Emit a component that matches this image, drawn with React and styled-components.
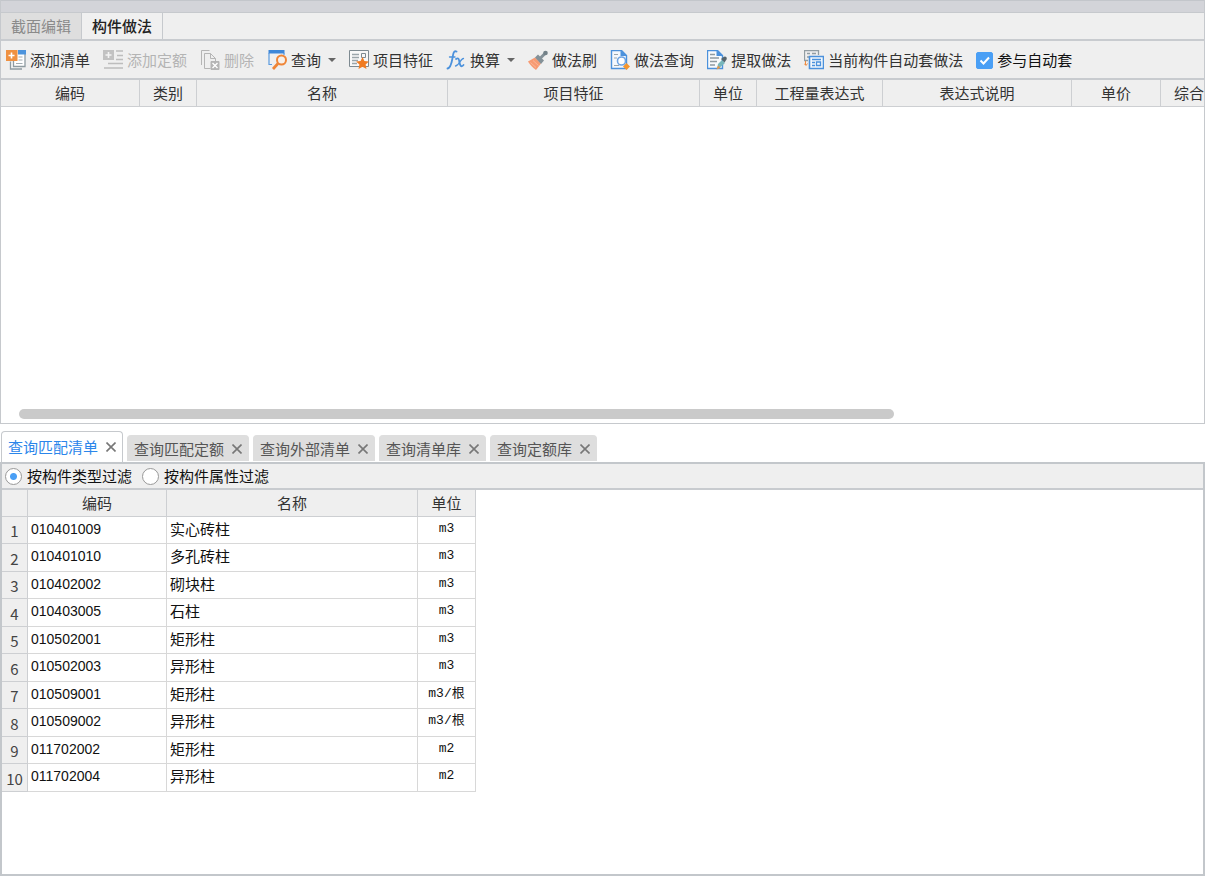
import React, { useState } from "react"
import styled, { createGlobalStyle } from "styled-components"

const GlobalStyle = createGlobalStyle`
  * {
    box-sizing: border-box;
  }

  body {
    margin: 0;
    background-color: #fff;
    color: #333;
    font-family: "Noto Sans CJK SC", sans-serif;
    font-size: 15px;
    line-height: 20px;
  }

  button,
  input {
    font: inherit;
    color: inherit;
    margin: 0;
  }
`

const Page = styled.div`
  display: flex;
  flex-direction: column;
  min-height: 100vh;
`

const TopPanel = styled.section`
  border: 1px solid #c6c9cd;
  border-top: 0;
  overflow: hidden;
`

const TitleStrip = styled.div`
  height: 13px;
  background-color: #d3d4d9;
  border-top: 1px solid #c3c6cb;
  border-bottom: 1px solid #c6c9cd;
`

const EditorTabs = styled.div`
  display: flex;
  background-color: #efefef;
  border-bottom: 2px solid #c8cbcf;
`

const EditorTab = styled.button`
  height: 26px;
  padding: 0 10px;
  border: 0;
  border-right: 1px solid #c6c9cd;
  background-color: ${({ $active }) => ($active ? "#f0f0f0" : "#dedede")};
  color: ${({ $active }) => ($active ? "#222" : "#8a8a8a")};
  font-weight: ${({ $active }) => ($active ? 500 : 400)};
`

const Toolbar = styled.div`
  display: flex;
  align-items: center;
  gap: 13px;
  height: 39px;
  padding: 1px 5px 0;
  background-color: #efefef;
  border-bottom: 2px solid #c8cbcf;
  white-space: nowrap;
`

const ToolButton = styled.button`
  display: flex;
  align-items: center;
  gap: 4px;
  padding: 0;
  border: 0;
  background: none;
  color: #333;

  &:disabled {
    color: #b4b4b4;
  }
`

const Icon = styled.svg`
  display: block;
  flex: none;
  width: 20px;
  height: 20px;
`

const Caret = styled.span`
  margin-left: 3px;
  border: solid transparent;
  border-width: 4px 4px 0;
  border-top-color: #666;
`

const CheckLabel = styled.label`
  display: flex;
  align-items: center;
  gap: 4px;
  color: #111;
`

const CheckBox = styled.input`
  appearance: none;
  width: 17px;
  height: 17px;
  border: 1px solid #4a9ff5;
  border-radius: 2px;
  background-color: #fff;

  &:checked {
    background: #4a9ff5
      url("data:image/svg+xml,%3Csvg xmlns='http://www.w3.org/2000/svg' viewBox='0 0 15 15'%3E%3Cpath d='M3.5 7.5l3 3 5.5-6' fill='none' stroke='white' stroke-width='2'/%3E%3C/svg%3E")
      center / 15px no-repeat;
  }
`

const Table = styled.table`
  width: ${({ $width }) => $width};
  table-layout: fixed;
  border-collapse: separate;
  border-spacing: 0;
`

const HeadCell = styled.th`
  height: 27px;
  padding: 0;
  background-color: #efefef;
  border-right: 1px solid #cdcfd2;
  border-bottom: 1px solid #cdcfd2;
  font-weight: 400;
  text-align: center;
  white-space: nowrap;
`

const EmptyArea = styled.div`
  display: flex;
  align-items: flex-end;
  height: 316px;
  padding: 0 18px 4px;
  background-color: #fff;
`

const ScrollThumb = styled.div`
  width: 75%;
  height: 10px;
  border-radius: 5px;
  background-color: #cacaca;
`

const QueryTabs = styled.div`
  display: flex;
  align-items: flex-end;
  gap: 4px;
  height: 38px;
  padding-left: 1px;
`

const QueryTab = styled.div`
  display: flex;
  align-items: center;
  gap: 8px;
  height: ${({ $active }) => ($active ? "31px" : "26px")};
  margin-bottom: ${({ $active }) => ($active ? "0" : "1px")};
  padding: 0 6px;
  border: 1px solid ${({ $active }) => ($active ? "#c6c9cd" : "#dedede")};
  border-bottom: 0;
  border-radius: 4px 4px 0 0;
  background-color: ${({ $active }) => ($active ? "#fff" : "#dedede")};
  color: ${({ $active }) => ($active ? "#2b86ea" : "#555")};
`

const PlainButton = styled.button`
  display: block;
  padding: 0;
  border: 0;
  background: none;
`

const CloseIcon = styled.svg`
  display: block;
  width: 10px;
  height: 10px;
  stroke: #777;
  stroke-width: 1.6;
`

const QueryPanel = styled.section`
  flex: 1;
  border: 2px solid #c3c7cb;
`

const FilterBar = styled.div`
  display: flex;
  align-items: center;
  gap: 10px;
  height: 26px;
  padding: 0 3px;
  background-color: #efefef;
  border-bottom: 2px solid #c8cbcf;
`

const RadioLabel = styled.label`
  display: flex;
  align-items: center;
  gap: 5px;
  color: #111;
`

const Radio = styled.input`
  appearance: none;
  width: 17px;
  height: 17px;
  border: 1px solid #999;
  border-radius: 50%;
  background-color: #fff;

  &:checked {
    background-image: radial-gradient(circle, #4a9ff5 3px, transparent 4px);
  }
`

const Row = styled.tr`
  height: 27px;

  &:nth-child(even) {
    height: 28px;
  }
`

const Cell = styled.td`
  padding: 0 3px 3px;
  border-right: 1px solid #d8d8d8;
  border-bottom: 1px solid #d8d8d8;
  color: #111;
`

const NumberCell = styled.th`
  padding: 2px 0 0;
  background-color: #efefef;
  border-right: 1px solid #cdcfd2;
  border-bottom: 1px solid #cdcfd2;
  font-weight: 400;
  color: #444;
`

const CodeCell = styled(Cell)`
  font-family: "Liberation Sans", sans-serif;
  font-size: 14px;
`

const UnitCell = styled(Cell)`
  font-family: "Liberation Mono", "Noto Sans CJK SC", monospace;
  font-size: 13px;
  text-align: center;
`

const AddListIcon = () => (
  <Icon viewBox="0 0 20 20">
    <path d="M4 12h10v7H4z" fill="#f7f8f8" />
    <path d="M4.500 11.500v7.500H16" fill="none" stroke="#8f9ba1" strokeWidth="1.300" />
    <path d="M7 4h12v12.500H7z" fill="#fff" />
    <path d="M7.500 11v5.500h11.500V4" fill="none" stroke="#8f9ba1" strokeWidth="1.300" />
    <path d="M12.500 7h4M12.500 10h4M10 13.500h6.500" stroke="#a3adb2" strokeWidth="1.200" />
    <path d="M12 0h8v4.500h-8z" fill="#4d94dd" />
    <path d="M0 0h11.500v11H0z" fill="#ef9142" />
    <path d="M5.500 2.500v6M2.500 5.500h6" stroke="#fff" strokeWidth="1.600" />
  </Icon>
)

const AddQuotaIcon = () => (
  <Icon viewBox="0 0 20 20">
    <path d="M0 0h11v10H0z" fill="#c2c2c2" />
    <path d="M5.500 2v6M2.500 5h6" stroke="#f3f3f3" strokeWidth="1.600" />
    <path d="M13 1h7M14 5.500h6M13 9.500h7M5 13.500h15M1 18h19" stroke="#bdbdbd" strokeWidth="1.600" />
  </Icon>
)

const DeleteIcon = () => (
  <Icon viewBox="0 0 20 20" fill="none" stroke="#b5b5b5">
    <path d="M1.500 15V.5h8M4.500 18.500V3.500h6l5 5v3M10.500 3.500v5h5M4.500 18.500h6" />
    <path d="M11 11.500h8v8h-8z" fill="#b5b5b5" />
    <path d="M12.500 13l5 5m0-5l-5 5" stroke="#fff" strokeWidth="1.400" />
  </Icon>
)

const QueryIcon = () => (
  <Icon viewBox="0 0 20 20" fill="none">
    <path d="M2 3v11.500h3M17 3v2" stroke="#5a9be0" strokeWidth="1.200" />
    <path d="M1.500 0h16v3.500h-16z" fill="#3e87d8" />
    <circle cx="14.500" cy="10" r="4.500" fill="#f7f0ea" stroke="#ef8537" strokeWidth="2" />
    <path d="M11 13.500L6 19" stroke="#ef8537" strokeWidth="2.800" />
  </Icon>
)

const FeatureIcon = () => (
  <Icon viewBox="0 0 20 20" fill="none">
    <path d="M.5.500h19v16H.5z" fill="#f8f8f8" stroke="#7e8a91" />
    <path d="M3 4.500h7M3 7.500h7M3 10.500h6M3 13.500h5" stroke="#9ba5aa" strokeWidth="1.400" />
    <path d="M12.500 3.500h4v4h-4z" stroke="#7e8a91" />
    <path d="M13.500 7l1.900 4.100 4.500.5-3.300 3 .9 4.400-4-2.200-4 2.200.9-4.400-3.300-3 4.500-.5z" fill="#f07b22" />
  </Icon>
)

const FormulaIcon = () => (
  <Icon viewBox="0 0 20 20" fill="none" stroke="#4b91dc" strokeLinecap="round">
    <path d="M10.500 1.500C7.500 0 7.200 4 6.500 8S5 18 1.500 18.500" strokeWidth="1.800" />
    <path d="M3.500 7h5.500" strokeWidth="1.300" />
    <path d="M10 9c3-2 3 1 3.500 3.500S15 18 17.500 15" strokeWidth="1.800" />
    <path d="M17.500 8.500c-3 0-4 7-8 7.500" strokeWidth="1.300" />
  </Icon>
)

const BrushIcon = () => (
  <Icon viewBox="0 0 20 20">
    <path d="M0 11.500l7-4 6 6-5 6.500c-3-2-6-5-8-8.500z" fill="#f79a72" />
    <path d="M2.500 12.500l5.500 5M5 10.500l5.500 5" stroke="#fbb698" />
    <path d="M7 7.500l3-3 6 6-3 3.500z" fill="#849198" />
    <path d="M12.500 8L17 3.500" stroke="#849198" strokeWidth="3" />
    <circle cx="17.500" cy="3" r="2.300" fill="#738188" />
  </Icon>
)

const FindMethodIcon = () => (
  <Icon viewBox="0 0 20 20" fill="none">
    <path d="M1.500.500h10l5 5v13h-15z" fill="#f4f8fd" stroke="#4b91dc" strokeWidth="1.400" />
    <path d="M10.500 0l6.500 6h-6.500z" fill="#4b91dc" />
    <path d="M4 4.500h4M4 8h3M4 15.500h5" stroke="#9ba5aa" />
    <circle cx="11.500" cy="11" r="4" fill="#fff" stroke="#6da4e4" strokeWidth="1.600" />
    <path d="M16.500 13l3.500 3.500-3.500 3.500-3.500-3.500z" fill="#f4962f" />
  </Icon>
)

const ExtractIcon = () => (
  <Icon viewBox="0 0 20 20" fill="none">
    <path d="M.500.500h10l5 5v13h-15z" fill="#f8fafc" stroke="#4b91dc" strokeWidth="1.400" />
    <path d="M9.500 0l6.500 6H9.500z" fill="#4b91dc" />
    <path d="M3 4.500h5M3 8h9M3 11.500h7M3 15h5" stroke="#8f9ba1" strokeWidth="1.300" />
    <path d="M10 19l1-5 4-4 3 3-4.500 4z" fill="#78b7bb" />
    <path d="M14 9l2.500-2c2-1.500 4 .5 3 2.500l-2 3z" fill="#58666d" />
    <path d="M9.500 19.500l1.500-4 2.500 2.500z" fill="#e49749" />
  </Icon>
)

const AutoIcon = () => (
  <Icon viewBox="0 0 20 20" fill="none">
    <path d="M4 10.500H.5V.5h14V5M3 3.500h3M8 3.500h4M3 7h2" stroke="#929da3" strokeWidth="1.300" />
    <path d="M1.500 11v4M0 13.500l2 2 1.500-2" stroke="#ef8b40" />
    <path d="M5.500 6.500h14v12h-14z" fill="#f3f8fd" stroke="#4b91dc" strokeWidth="1.600" />
    <path d="M8 9.500h9M8 12.500h3M8 15.500h3" stroke="#4b91dc" strokeWidth="1.300" />
    <path d="M12.500 12h4v3.500h-4z" stroke="#4b91dc" strokeWidth="1.300" />
  </Icon>
)

const tools = [
  { label: "添加清单", icon: AddListIcon },
  { label: "添加定额", icon: AddQuotaIcon, disabled: true },
  { label: "删除", icon: DeleteIcon, disabled: true },
  { label: "查询", icon: QueryIcon, menu: true },
  { label: "项目特征", icon: FeatureIcon },
  { label: "换算", icon: FormulaIcon, menu: true },
  { label: "做法刷", icon: BrushIcon },
  { label: "做法查询", icon: FindMethodIcon },
  { label: "提取做法", icon: ExtractIcon },
  { label: "当前构件自动套做法", icon: AutoIcon },
]

// the last column runs past the right edge of the panel
const columns = [
  { label: "编码", width: 139 },
  { label: "类别", width: 57 },
  { label: "名称", width: 251 },
  { label: "项目特征", width: 252 },
  { label: "单位", width: 57 },
  { label: "工程量表达式", width: 126 },
  { label: "表达式说明", width: 189 },
  { label: "单价", width: 89 },
  { label: "综合" },
]

const queryTabs = ["查询匹配清单", "查询匹配定额", "查询外部清单", "查询清单库", "查询定额库"]

const filters = ["按构件类型过滤", "按构件属性过滤"]

const items = [
  ["010401009", "实心砖柱", "m3"],
  ["010401010", "多孔砖柱", "m3"],
  ["010402002", "砌块柱", "m3"],
  ["010403005", "石柱", "m3"],
  ["010502001", "矩形柱", "m3"],
  ["010502003", "异形柱", "m3"],
  ["010509001", "矩形柱", "m3/根"],
  ["010509002", "异形柱", "m3/根"],
  ["011702002", "矩形柱", "m2"],
  ["011702004", "异形柱", "m2"],
]

export default function App() {
  const [editorTab, setEditorTab] = useState("构件做法")
  const [queryTab, setQueryTab] = useState(queryTabs[0])
  const [filter, setFilter] = useState(filters[0])
  const [auto, setAuto] = useState(true)

  return (
    <Page>
      <GlobalStyle />
      <TopPanel>
        <TitleStrip />
        <EditorTabs>
          {["截面编辑", "构件做法"].map((name) => (
            <EditorTab key={name} $active={name === editorTab} onClick={() => setEditorTab(name)}>
              {name}
            </EditorTab>
          ))}
        </EditorTabs>
        <Toolbar>
          {tools.map(({ label, icon: ToolIcon, disabled, menu }) => (
            <ToolButton key={label} disabled={disabled}>
              <ToolIcon />
              {label}
              {menu && <Caret />}
            </ToolButton>
          ))}
          <CheckLabel>
            <CheckBox type="checkbox" checked={auto} onChange={(e) => setAuto(e.target.checked)} />
            参与自动套
          </CheckLabel>
        </Toolbar>
        <Table $width="calc(100% + 14px)">
          <colgroup>
            {columns.map(({ label, width }) => (
              <col key={label} width={width} />
            ))}
          </colgroup>
          <thead>
            <tr>
              {columns.map(({ label }) => (
                <HeadCell key={label}>{label}</HeadCell>
              ))}
            </tr>
          </thead>
        </Table>
        <EmptyArea>
          <ScrollThumb />
        </EmptyArea>
      </TopPanel>

      <QueryTabs>
        {queryTabs.map((name) => (
          <QueryTab key={name} $active={name === queryTab}>
            <PlainButton onClick={() => setQueryTab(name)}>{name}</PlainButton>
            <PlainButton aria-label="关闭">
              <CloseIcon viewBox="0 0 10 10">
                <path d="M.5.500l9 9m0-9l-9 9" />
              </CloseIcon>
            </PlainButton>
          </QueryTab>
        ))}
      </QueryTabs>
      <QueryPanel>
        <FilterBar>
          {filters.map((name) => (
            <RadioLabel key={name}>
              <Radio
                type="radio"
                name="filter"
                checked={name === filter}
                onChange={() => setFilter(name)}
              />
              {name}
            </RadioLabel>
          ))}
        </FilterBar>
        <Table $width="474px">
          <colgroup>
            <col width={26} />
            <col width={139} />
            <col width={251} />
            <col width={58} />
          </colgroup>
          <thead>
            <tr>
              <HeadCell />
              <HeadCell>编码</HeadCell>
              <HeadCell>名称</HeadCell>
              <HeadCell>单位</HeadCell>
            </tr>
          </thead>
          <tbody>
            {items.map(([code, name, unit], index) => (
              <Row key={code}>
                <NumberCell>{index + 1}</NumberCell>
                <CodeCell>{code}</CodeCell>
                <Cell>{name}</Cell>
                <UnitCell>{unit}</UnitCell>
              </Row>
            ))}
          </tbody>
        </Table>
      </QueryPanel>
    </Page>
  )
}
